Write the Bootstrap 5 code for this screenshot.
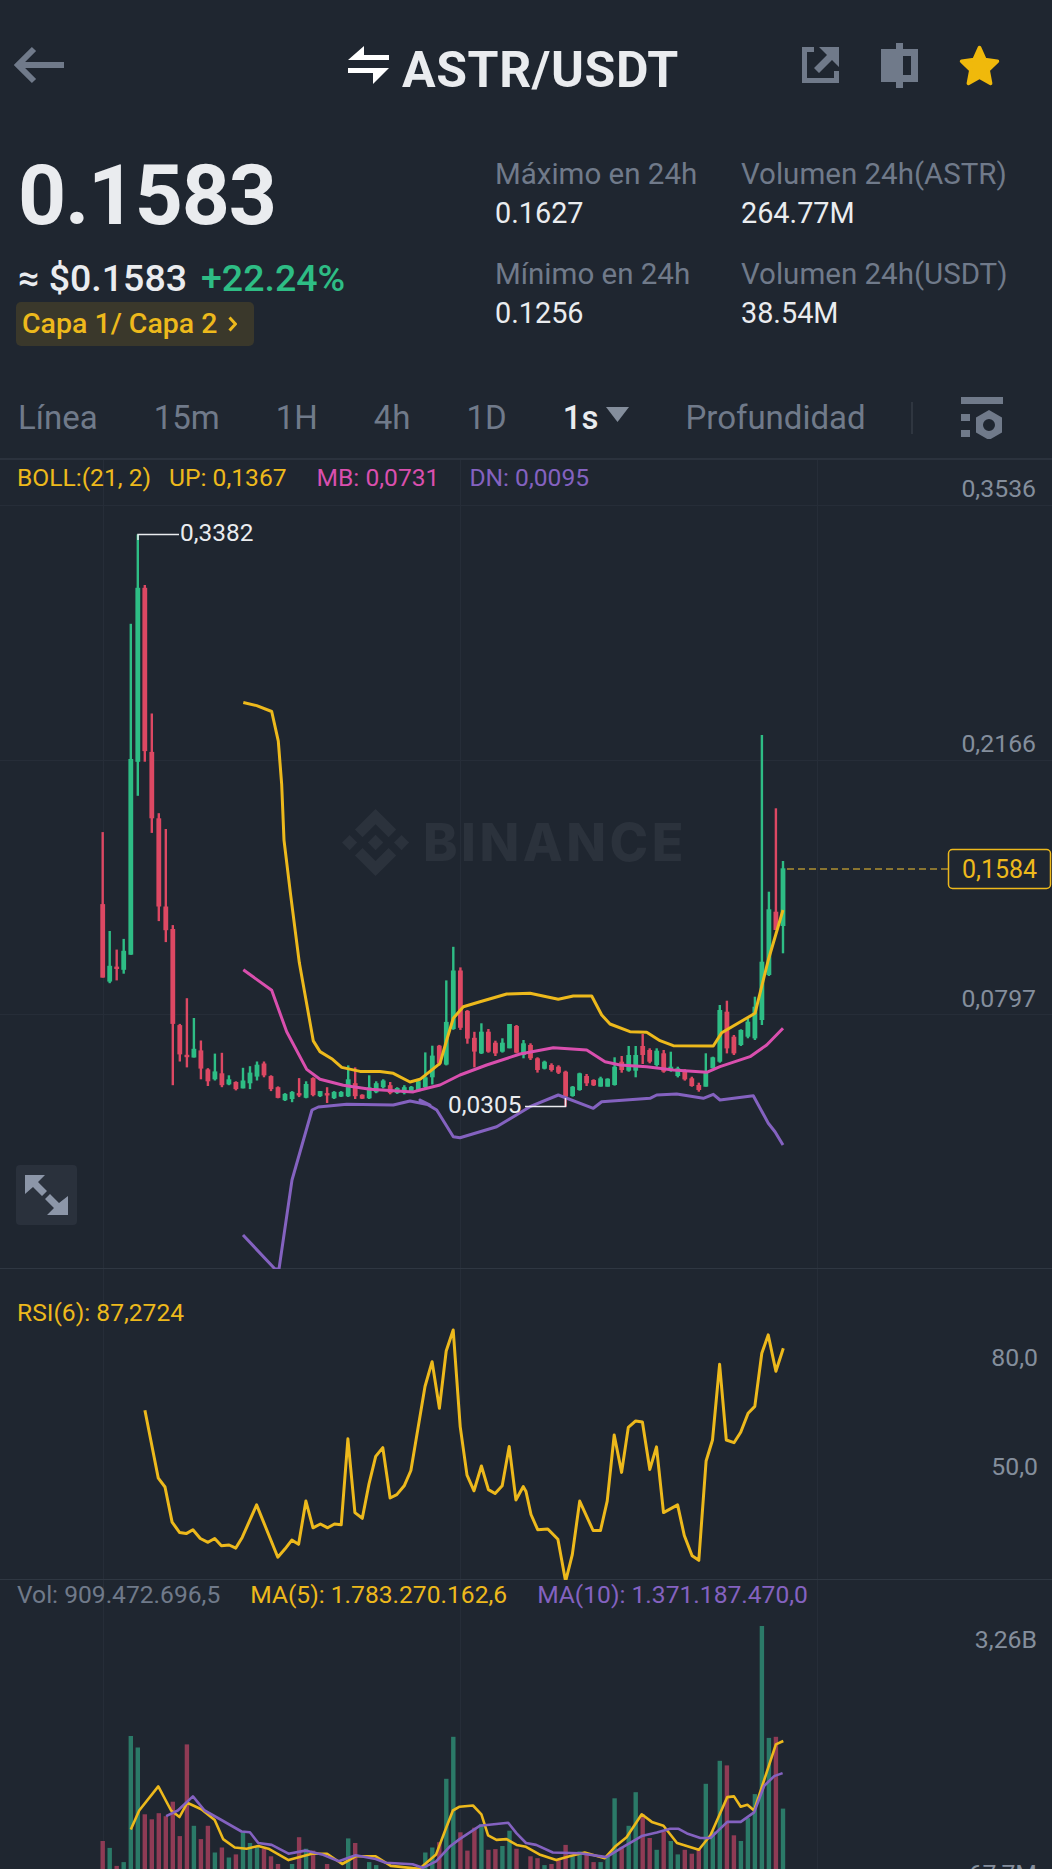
<!DOCTYPE html>
<html lang="en">
<head>
  <meta charset="UTF-8">
  <meta name="viewport" content="width=device-width, initial-scale=1.0">
  <title>ASTR/USDT</title>
  <link href="https://cdn.jsdelivr.net/npm/bootstrap@5.3.3/dist/css/bootstrap.min.css" rel="stylesheet">
  <style>
    body {
      background: #1f2630;
      color: #eaecef;
      font-family: Roboto, "Liberation Sans", sans-serif;
      width: 1052px;
      height: 1869px;
      overflow: hidden;
    }
    .top-bar { height: 130px; padding: 0 51px 0 14px; }
    .swap-icon { margin-left: 284px; margin-right: 13px; }
    .pair-name { font-size: 50px; font-weight: 700; line-height: 1; letter-spacing: .6px; margin-top: 10px; }
    .top-icons { gap: 40px; }
    .share-icon { margin-right: 2px; }
    .summary { height: 250px; }
    .price-col { width: 495px; padding-left: 18px; }
    .big-price { font-size: 84px; font-weight: 700; line-height: 90px; margin-top: 21px; letter-spacing: -1.3px; }
    .sub-price { font-size: 37.500px; font-weight: 500; line-height: 40px; margin-top: 17px; }
    .sub-price span + span { margin-left: 14px; color: #2ebd85; }
    .cat-tag {
      display: inline-flex;
      align-items: center;
      gap: 11px;
      height: 44px;
      margin: 4px 0 0 -2px;
      padding: 0 17px 0 6px;
      background: #3a382b;
      border-radius: 5px;
      color: #edb91c;
      font-size: 28.500px;
      font-weight: 500;
    }
    .stat-col { width: 246px; padding-top: 26px; }
    .stat-label { color: #707a8a; font-size: 29.500px; line-height: 36px; white-space: nowrap; }
    .stat-value { font-size: 28.800px; line-height: 36px; margin-top: 3px; margin-bottom: 25px; }
    .tab-bar { height: 80px; padding: 0 0 2px 18px; gap: 56px; font-size: 33px; color: #707a8a; border-bottom: 2px solid #2b323d; }
    .tab-on { color: #eaecef; font-weight: 500; }
    .tab-sep { width: 2px; height: 32px; background: #2f3640; margin-left: -11px; }
    .tab-tool { margin-left: -8px; }
    .pane { position: relative; }
    .pane-main { height: 809px; }
    .pane-rsi { height: 311px; }
    .pane-vol { height: 289px; }
    .pane svg.plot { position: absolute; left: 0; top: 0; }
    .legend { position: relative; z-index: 1; padding-left: 17px; font-size: 24.600px; line-height: 26px; white-space: nowrap; }
    .pane-main .legend { padding-top: 5px; gap: 30px; }
    .boll-name { margin-right: -12px; }
    .pane-rsi .legend { padding-top: 31px; }
    .pane-vol .legend { padding-top: 2px; gap: 30px; }
    .c-yellow { color: #edb91c; }
    .c-pink { color: #d94fae; }
    .c-purple { color: #8462c0; }
    .c-grey { color: #707a8a; }
    .expand-btn {
      position: absolute;
      left: 16px;
      top: 705px;
      width: 61px;
      height: 60px;
      background: #2a313c;
      border-radius: 4px;
    }
    .axis-text { fill: #848e9c; font-size: 24.800px; text-anchor: end; }
    .note-text { fill: #eaecef; font-size: 24.400px; }
  </style>
</head>
<body>
  <div class="top-bar d-flex align-items-center">
    <svg width="50" height="38" viewBox="0 0 50 38"><path d="M20 3 4 19l16 16M5 19h45" fill="none" stroke="#707a8a" stroke-width="6"/></svg>
    <svg class="swap-icon" width="41" height="38" viewBox="0 0 41 38"><path d="M0 14 16 0v9h25v5zM41 22 25 38v-11H0v-5z" fill="#fff"/></svg>
    <div class="pair-name">ASTR/USDT</div>
    <div class="top-icons d-flex align-items-center ms-auto">
      <svg class="share-icon" width="37" height="36" viewBox="0 0 37 36"><path d="M0 0h12v5H5v26h27v-7h5v12H0z" fill="#707a8a"/><path d="M17 0h20v20l-7-7-13 13-5-5 13-13z" fill="#707a8a"/></svg>
      <svg width="37" height="45" viewBox="0 0 37 45"><path d="M15 0h7v6h15v33H22v6h-7v-6H0V6h15zM22 13v19h8V13z" fill="#707a8a" fill-rule="evenodd"/></svg>
      <svg width="43" height="43" viewBox="0 0 24 24"><path d="M12 2l3 6.700 7 .9-5.200 5 1.400 7.400-6.200-3.500L5.800 22l1.400-7.400L2 9.600l7-.9z" fill="#f0b90b" stroke="#f0b90b" stroke-width="2" stroke-linejoin="round"/></svg>
    </div>
  </div>

  <div class="summary d-flex">
    <div class="price-col">
      <div class="big-price">0.1583</div>
      <div class="sub-price"><span>≈ $0.1583</span><span>+22.24%</span></div>
      <div class="cat-tag">Capa 1/ Capa 2
        <svg width="9" height="16" viewBox="0 0 9 16"><path d="M1.500 1.500 7.500 8l-6 6.500" fill="none" stroke="#edb91c" stroke-width="3"/></svg>
      </div>
    </div>
    <div class="stat-col">
      <div class="stat-label">Máximo en 24h</div>
      <div class="stat-value">0.1627</div>
      <div class="stat-label">Mínimo en 24h</div>
      <div class="stat-value">0.1256</div>
    </div>
    <div class="stat-col">
      <div class="stat-label">Volumen 24h(ASTR)</div>
      <div class="stat-value">264.77M</div>
      <div class="stat-label">Volumen 24h(USDT)</div>
      <div class="stat-value">38.54M</div>
    </div>
  </div>

  <div class="tab-bar d-flex align-items-center">
    <span>Línea</span>
    <span>15m</span>
    <span>1H</span>
    <span>4h</span>
    <span>1D</span>
    <span class="d-flex align-items-center gap-2">
      <span class="tab-on">1s</span>
      <svg class="mb-2" width="23" height="15" viewBox="0 0 23 15"><path d="M0 0h23L11.500 15z" fill="#848e9c"/></svg>
    </span>
    <span>Profundidad</span>
    <span class="tab-sep"></span>
    <svg class="tab-tool" width="42" height="42" viewBox="0 0 42 42"><path d="M0 0h42v7H0zM0 17h9v7H0zM0 33h9v7H0z" fill="#707a8a"/><path d="M28 13l13 7.500v15L28 43l-13-7.500v-15zM28 22a6 6 0 1 0 0 12 6 6 0 0 0 0-12z" fill="#707a8a" fill-rule="evenodd"/></svg>
  </div>

  <div class="pane pane-main">
    <svg class="plot" id="mainPlot" width="1052" height="809" viewBox="0 460 1052 809"></svg>
    <div class="legend d-flex">
      <span class="c-yellow boll-name">BOLL:(21, 2)</span>
      <span class="c-yellow">UP: 0,1367</span>
      <span class="c-pink">MB: 0,0731</span>
      <span class="c-purple">DN: 0,0095</span>
    </div>
    <div class="expand-btn">
      <svg width="61" height="60" viewBox="0 0 61 60"><path d="M9 10h20l-7 7 9 9-5 5-9-9-8 7zM52 50H31l7-7-9-9 5-5 9 9 9-7z" fill="#8c96a8"/></svg>
    </div>
  </div>

  <div class="pane pane-rsi">
    <svg class="plot" id="rsiPlot" width="1052" height="311" viewBox="0 1269 1052 311"></svg>
    <div class="legend c-yellow">RSI(6): 87,2724</div>
  </div>

  <div class="pane pane-vol">
    <svg class="plot" id="volPlot" width="1052" height="289" viewBox="0 1580 1052 289"></svg>
    <div class="legend d-flex">
      <span class="c-grey">Vol: 909.472.696,5</span>
      <span class="c-yellow">MA(5): 1.783.270.162,6</span>
      <span class="c-purple">MA(10): 1.371.187.470,0</span>
    </div>
  </div>

  <script>
    const GREEN = '#2ebd85', RED = '#dd4863', YELLOW = '#edb91c', PINK = '#d94fae', PURPLE = '#8462c0';
    const barX = i => 102.7 + 7.013 * i;

    // the numbers below were read off enlarged crops, so each group has its own scale
    const fromA = ([x, y]) => [80 + x / 3, 500 + y / 2.529];
    const fromB = ([x, y]) => [420 + x / 3, 720 + y / 3];
    const fromC = ([x, y]) => [x / 2.981, 1270 + y / 2.618];
    const fromD = ([x, y]) => [526 + x / 2.981, 1270 + y / 2.618];

    // [up?, high, body top, body bottom, low]
    const candlesA = [
      [0,840,1022,1208,1208],[1,1090,1178,1218,1222],[0,1137,1180,1186,1215],[1,1110,1140,1188,1198],
      [1,313,655,1150,1150],[1,87,222,662,748],[0,215,222,635,662],[0,540,637,805,842],
      [0,792,805,1028,1065],[0,832,1028,1088,1118],[0,1075,1085,1325,1480],[0,1325,1328,1402,1420],
      [0,1260,1403,1409,1435],[1,1310,1388,1410,1410],[0,1367,1392,1438,1465],[0,1437,1440,1470,1482],
      [1,1400,1445,1465,1468],[0,1398,1450,1480,1485],[1,1455,1465,1478,1480],[0,1470,1472,1490,1493],
      [1,1436,1468,1488,1488],[1,1432,1448,1475,1490],[1,1420,1428,1458,1468],[0,1420,1425,1455,1460],
      [0,1455,1457,1490,1495],[0,1483,1485,1512,1513],[1,1500,1502,1518,1520],[1,1495,1497,1515,1523],
      [0,1462,1500,1506,1510],[1,1470,1477,1512,1513],[0,1460,1462,1505,1508],[1,1495,1495,1508,1510],
      [0,1485,1500,1506,1525],[1,1495,1497,1513,1515],[1,1495,1497,1509,1510],[1,1430,1465,1508,1510],
      [0,1435,1475,1508,1515],[0,1503,1504,1514,1515],[1,1455,1485,1513,1515],[1,1470,1475,1498,1500],
      [1,1465,1468,1485,1488],[0,1472,1480,1500,1503],[1,1485,1487,1500,1502],[1,1480,1485,1500,1503],
      [1,1482,1484,1497,1498],[1,1465,1470,1495,1495],[1,1397,1460,1485,1488],[1,1380,1405,1460,1478],
      [0,1378,1380,1425,1430],[1,1215,1320,1428,1430],[1,1130,1190,1338,1340],[0,1182,1190,1335,1340],
      [0,1290,1292,1362,1375],[0,1345,1360,1395,1435]
    ];
    const candlesB = [
      [1,910,935,1000,1002],[0,927,935,995,998],[0,962,968,1000,1008],[1,955,968,995,998],
      [1,912,912,985,985],[0,915,918,998,1000],[1,960,970,1005,1015],[0,970,975,1015,1020],
      [0,1012,1015,1050,1058],[1,1022,1025,1046,1048],[0,1030,1035,1050,1055],[0,1036,1040,1058,1062],
      [0,1052,1055,1130,1160],[1,1098,1100,1128,1130],[1,1058,1060,1110,1112],[0,1062,1068,1090,1098],
      [0,1078,1080,1096,1098],[1,1070,1075,1100,1100],[1,1075,1076,1100,1100],[1,1012,1040,1095,1097],
      [0,1008,1025,1050,1058],[1,978,1005,1052,1055],[1,978,1005,1052,1072],[0,942,978,1005,1032],
      [0,985,990,1025,1030],[1,985,992,1035,1040],[0,990,1000,1055,1058],[1,995,1040,1050,1055],
      [1,1040,1045,1068,1072],[0,1048,1052,1078,1082],[0,1070,1075,1098,1100],[0,1088,1095,1110,1115],
      [1,1000,1055,1100,1100],[1,1010,1012,1045,1045],[1,855,870,1025,1028],[0,842,875,985,1000],
      [0,945,950,1000,1005],[1,928,930,975,978],[1,895,905,950,955],[1,830,860,955,960],
      [1,45,725,900,915],[1,515,568,765,768],[0,265,575,630,630],[1,423,445,618,700]
    ];
    const toY = (list, f) => list.map(c => [c[0], ...c.slice(1).map(v => f([0, v])[1])]);
    const candles = [...toY(candlesA, fromA), ...toY(candlesB, fromB)];

    const upperLine = [
      ...[[490,512],[530,520],[575,535],[595,610],[605,720],[612,860],[632,1000],[658,1170],[700,1368],[720,1395],[755,1413],[785,1435],[840,1445],[900,1445],[940,1450],[990,1472],[1020,1465]].map(fromA),
      ...[[60,1030],[80,960],[100,895],[130,860],[180,845],[260,822],[330,820],[415,838],[460,828],[515,828],[545,885],[570,912],[630,935],[680,937],[720,962],[760,977],[880,978],[905,938],[1005,880],[1045,720],[1089,570]].map(fromB)
    ];
    const midLine = [
      ...[[490,1188],[575,1240],[620,1345],[680,1440],[720,1465],[790,1480],[870,1490],[1000,1497]].map(fromA),
      ...[[0,1110],[60,1095],[120,1065],[200,1035],[300,1002],[400,983],[500,990],[555,1025],[600,1035],[680,1040],[760,1050],[860,1057],[900,1040],[990,1010],[1040,975],[1089,925]].map(fromB)
    ];
    const lowerLine = [
      [243,1235],[275,1269],[279,1269],[292,1180],[312,1110],
      ...[[715,1535],[800,1528],[940,1530],[990,1520],[1050,1530]].map(fromA),
      ...[[0,1140],[50,1170],[100,1250],[120,1253],[230,1220],[330,1160],[415,1125],[520,1165],[545,1145],[690,1135],[710,1125],[770,1122],[850,1135],[880,1123],[900,1140],[1000,1127],[1045,1210],[1065,1235],[1089,1275]].map(fromB)
    ];
    const rsiLine = [
      ...[[432,367],[472,545],[492,568],[513,660],[535,687],[555,690],[575,680],[597,703],[620,713],[640,703],[660,722],[683,720],[703,728],[722,700],[765,615],[828,752],[850,730],[870,707],[890,718],[912,605],[933,675],[955,665],[977,675],[997,665],[1017,667],[1037,442],[1058,635],[1080,650],[1100,560],[1120,488],[1141,465],[1163,597],[1183,588],[1205,565],[1225,525],[1267,305],[1288,240],[1310,362],[1330,212],[1351,157],[1372,410],[1392,537],[1413,578],[1435,513],[1456,575],[1476,585],[1497,565],[1518,462],[1538,602],[1560,567]].map(fromC),
      ...[[0,580],[15,640],[35,680],[65,678],[95,705],[118,815],[138,745],[160,605],[200,682],[222,682],[242,605],[263,432],[285,530],[305,412],[327,395],[347,398],[369,522],[389,463],[410,635],[452,615],[472,695],[495,748],[515,760],[537,500],[556,445],[577,247],[597,445],[620,452],[640,425],[662,375],[682,357],[703,218],[722,170],[745,265],[767,205]].map(fromD)
    ];
    const ma5Line = [
      ...[[390,1465],[415,1415],[472,1352],[510,1415],[535,1432],[558,1395],[600,1412],[640,1440],[665,1490],[700,1512],[735,1515],[770,1508],[800,1515],[860,1545],[930,1528],[975,1528],[1020,1555],[1060,1535],[1120,1535],[1165,1560],[1250,1568],[1300,1530],[1330,1460],[1350,1415],[1370,1405],[1410,1402],[1435,1425],[1455,1480],[1480,1492],[1510,1490],[1540,1505]].map(fromC),
      ...[[0,1510],[40,1530],[90,1545],[130,1535],[175,1525],[235,1540],[265,1510],[300,1485],[345,1425],[375,1445],[410,1455],[450,1500],[515,1518],[550,1480],[600,1380],[620,1378],[640,1405],[660,1400],[680,1415],[745,1242],[767,1233]].map(fromD)
    ];
    const ma10Line = [
      ...[[495,1430],[530,1415],[575,1378],[610,1415],[660,1440],[720,1470],[745,1472],[770,1500],[810,1505],[860,1528],[910,1520],[960,1530],[1010,1548],[1060,1532],[1120,1542],[1150,1552],[1230,1556],[1260,1565],[1300,1548],[1340,1510],[1370,1490],[1430,1455],[1515,1447],[1540,1475]].map(fromC),
      ...[[0,1500],[30,1505],[80,1525],[160,1527],[240,1537],[290,1510],[345,1482],[390,1473],[430,1463],[455,1463],[480,1475],[520,1487],[550,1487],[600,1445],[640,1445],[680,1420],[710,1350],[740,1325],[765,1317]].map(fromD)
    ];

    // volume tops, one per bar: [up?, top]. bars below the fold are left at the edge
    const volTops = [
      [0,1495],[1,1513],[0,1560],[1,1550],[1,1220],[1,1250],[0,1425],[0,1438],[0,1422],[0,1430],[0,1392],[0,1482],[0,1242],[1,1455],[0,1490],[0,1455],[1,1525],[0,1512],[1,1538],[0,1530],
      [1,1472],[1,1500],[1,1510],[0,1515],[0,1535],[0,1555],[1,1570],[1,1555],[0,1485],[1,1515],[0,1520],[1,1570],[0,1555],[1,1570],[1,1570],[1,1488],[0,1500],[0,1570],[1,1550],[1,1558],
      [1,1570],[0,1570],[1,1570],[1,1570],[1,1570],[1,1570],[1,1525],[1,1512],[0,1498],[1,1332],[1,1222],[0,1472],[0,1520],[0,1460],[1,1450],[0,1518],[0,1516],[1,1508],[1,1468],[0,1515],[1,1570],
      [0,1535],[0,1540],[1,1558],[0,1555],[0,1545],[0,1505],[1,1535],[1,1522],[0,1530],[0,1550],[1,1550],[1,1535],[1,1383],[0,1510],[1,1455],[1,1367],[0,1425],[0,1487],[1,1518],[0,1470],
      [1,1495],[1,1530],[0,1518],[0,1528],[0,1515],[1,1345],[1,1470],[1,1285],[0,1297],[0,1480],[1,1495],[1,1435],[1,1372],[1,932],[1,1225],[0,1222],[1,1410]
    ];

    const polyline = (pts, color, width) =>
      `<polyline points="${pts.map(p => p.map(v => v.toFixed(1)).join(',')).join(' ')}" fill="none" stroke="${color}" stroke-width="${width}" stroke-linejoin="round"/>`;
    const hLine = (y, color) => `<rect x="0" y="${y}" width="1052" height="1" fill="${color}"/>`;
    const vLines = (y, h) => [103, 460, 817].map(x => `<rect x="${x}" y="${y}" width="1" height="${h}" fill="#262d38"/>`).join('');
    const axis = (y, t, x = 1036) => `<text class="axis-text" x="${x}" y="${y}">${t}</text>`;

    // main pane
    let main = vLines(460, 809);
    main += hLine(505, '#262d38') + hLine(760, '#262d38') + hLine(1014, '#262d38') + hLine(1268, '#2f3742');
    main += axis(497, '0,3536') + axis(752, '0,2166') + axis(1007, '0,0797');
    main += `<g transform="translate(342 809) scale(.53)" fill="#2b323c">
      <path d="M38.730 53.200l24.590-24.580 24.600 24.600 14.300-14.310L63.320 0 24.430 38.900z"/>
      <path d="M0 63.310l14.300-14.300 14.310 14.300-14.310 14.300z"/>
      <path d="M38.730 73.410l24.590 24.590 24.600-24.600 14.310 14.290-38.900 38.910-38.910-38.880z"/>
      <path d="M98.010 63.310l14.300-14.300 14.310 14.300-14.310 14.300z"/>
      <path d="M77.830 63.300 63.320 48.780 48.810 63.280l14.510 14.500z"/></g>`;
    main += `<text x="423" y="861" fill="#2b323c" font-family="Inter, sans-serif" font-size="52" font-weight="800" letter-spacing="3.500">BINANCE</text>`;
    candles.forEach((c, i) => {
      const x = barX(i), color = c[0] ? GREEN : RED;
      main += `<rect x="${(x - 1.2).toFixed(1)}" y="${c[1].toFixed(1)}" width="2.400" height="${(c[4] - c[1]).toFixed(1)}" fill="${color}"/>`;
      main += `<rect x="${(x - 2.4).toFixed(1)}" y="${c[2].toFixed(1)}" width="4.800" height="${Math.max(c[3] - c[2], 2).toFixed(1)}" fill="${color}"/>`;
    });
    main += polyline(upperLine, YELLOW, 3) + polyline(midLine, PINK, 3) + polyline(lowerLine, PURPLE, 3);
    main += `<path d="M138 540V534.500H179M525 1106.500H565.500V1098" fill="none" stroke="#eaecef" stroke-width="1.500"/>`;
    main += `<text class="note-text" x="180" y="541">0,3382</text><text class="note-text" x="448" y="1113">0,0305</text>`;
    main += `<path d="M787 869H948" stroke="#8a7530" stroke-width="2" stroke-dasharray="7 4"/>`;
    main += `<rect x="948.500" y="849.500" width="102" height="39" rx="4" fill="#1f2630" stroke="${YELLOW}" stroke-width="1.500"/>`;
    main += `<text x="999.500" y="878" text-anchor="middle" fill="${YELLOW}" font-size="25">0,1584</text>`;
    document.getElementById('mainPlot').innerHTML = main;

    // rsi pane
    let rsi = vLines(1269, 311) + hLine(1579, '#2f3742');
    rsi += axis(1366, '80,0', 1038) + axis(1475, '50,0', 1038);
    rsi += polyline(rsiLine, YELLOW, 3);
    document.getElementById('rsiPlot').innerHTML = rsi;

    // volume pane
    let vol = vLines(1580, 289);
    vol += axis(1648, '3,26B', 1037) + axis(1882, '67,7M', 1037);
    volTops.forEach((v, i) => {
      const y = fromC([0, v[1]])[1];
      vol += `<rect x="${(barX(i) - 2.2).toFixed(1)}" y="${y.toFixed(1)}" width="4.400" height="${(1869 - y).toFixed(1)}" fill="${v[0] ? '#2b7a68' : '#8f3b55'}"/>`;
    });
    vol += polyline(ma5Line, YELLOW, 2.6) + polyline(ma10Line, PURPLE, 2.6);
    document.getElementById('volPlot').innerHTML = vol;
  </script>
  <script src="https://cdn.jsdelivr.net/npm/bootstrap@5.3.3/dist/js/bootstrap.bundle.min.js"></script>
</body>
</html>
